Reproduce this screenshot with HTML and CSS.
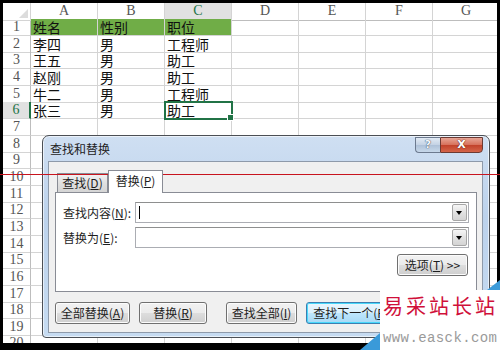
FILE: index.html
```html
<!DOCTYPE html>
<html lang="zh-CN">
<head>
    <meta charset="UTF-8">
    <title>查找和替换</title>
    <link rel="stylesheet" href="styles.css">
</head>
<body>
<div class="screen">

    <!-- Feuille de calcul -->
    <div class="sheet">
        <div class="row head">
            <div class="corner"></div>
            <div class="col">A</div><div class="col">B</div><div class="col active">C</div><div class="col">D</div><div class="col">E</div><div class="col">F</div><div class="col">G</div>
        </div>
        <div class="row">
            <div class="num">1</div>
            <div class="cell fill">姓名</div><div class="cell fill">性别</div><div class="cell fill">职位</div><div class="cell"></div><div class="cell"></div><div class="cell"></div><div class="cell"></div>
        </div>
        <div class="row">
            <div class="num">2</div>
            <div class="cell">李四</div><div class="cell">男</div><div class="cell">工程师</div><div class="cell"></div><div class="cell"></div><div class="cell"></div><div class="cell"></div>
        </div>
        <div class="row">
            <div class="num">3</div>
            <div class="cell">王五</div><div class="cell">男</div><div class="cell">助工</div><div class="cell"></div><div class="cell"></div><div class="cell"></div><div class="cell"></div>
        </div>
        <div class="row">
            <div class="num">4</div>
            <div class="cell">赵刚</div><div class="cell">男</div><div class="cell">助工</div><div class="cell"></div><div class="cell"></div><div class="cell"></div><div class="cell"></div>
        </div>
        <div class="row">
            <div class="num">5</div>
            <div class="cell">牛二</div><div class="cell">男</div><div class="cell">工程师</div><div class="cell"></div><div class="cell"></div><div class="cell"></div><div class="cell"></div>
        </div>
        <div class="row">
            <div class="num active">6</div>
            <div class="cell">张三</div><div class="cell">男</div><div class="cell selected">助工</div><div class="cell"></div><div class="cell"></div><div class="cell"></div><div class="cell"></div>
        </div>
        <div class="row"><div class="num">7</div><div class="cell"></div><div class="cell"></div><div class="cell"></div><div class="cell"></div><div class="cell"></div><div class="cell"></div><div class="cell"></div></div>
        <div class="row"><div class="num">8</div><div class="cell"></div><div class="cell"></div><div class="cell"></div><div class="cell"></div><div class="cell"></div><div class="cell"></div><div class="cell"></div></div>
        <div class="row"><div class="num">9</div><div class="cell"></div><div class="cell"></div><div class="cell"></div><div class="cell"></div><div class="cell"></div><div class="cell"></div><div class="cell"></div></div>
        <div class="row"><div class="num">10</div><div class="cell"></div><div class="cell"></div><div class="cell"></div><div class="cell"></div><div class="cell"></div><div class="cell"></div><div class="cell"></div></div>
        <div class="row"><div class="num">11</div><div class="cell"></div><div class="cell"></div><div class="cell"></div><div class="cell"></div><div class="cell"></div><div class="cell"></div><div class="cell"></div></div>
        <div class="row"><div class="num">12</div><div class="cell"></div><div class="cell"></div><div class="cell"></div><div class="cell"></div><div class="cell"></div><div class="cell"></div><div class="cell"></div></div>
        <div class="row"><div class="num">13</div><div class="cell"></div><div class="cell"></div><div class="cell"></div><div class="cell"></div><div class="cell"></div><div class="cell"></div><div class="cell"></div></div>
        <div class="row"><div class="num">14</div><div class="cell"></div><div class="cell"></div><div class="cell"></div><div class="cell"></div><div class="cell"></div><div class="cell"></div><div class="cell"></div></div>
        <div class="row"><div class="num">15</div><div class="cell"></div><div class="cell"></div><div class="cell"></div><div class="cell"></div><div class="cell"></div><div class="cell"></div><div class="cell"></div></div>
        <div class="row"><div class="num">16</div><div class="cell"></div><div class="cell"></div><div class="cell"></div><div class="cell"></div><div class="cell"></div><div class="cell"></div><div class="cell"></div></div>
        <div class="row"><div class="num">17</div><div class="cell"></div><div class="cell"></div><div class="cell"></div><div class="cell"></div><div class="cell"></div><div class="cell"></div><div class="cell"></div></div>
        <div class="row"><div class="num">18</div><div class="cell"></div><div class="cell"></div><div class="cell"></div><div class="cell"></div><div class="cell"></div><div class="cell"></div><div class="cell"></div></div>
        <div class="row"><div class="num">19</div><div class="cell"></div><div class="cell"></div><div class="cell"></div><div class="cell"></div><div class="cell"></div><div class="cell"></div><div class="cell"></div></div>
        <div class="row"><div class="num">20</div><div class="cell"></div><div class="cell"></div><div class="cell"></div><div class="cell"></div><div class="cell"></div><div class="cell"></div><div class="cell"></div></div>
    </div>

    <!-- Boîte de dialogue -->
    <div class="dialog">
        <div class="titlebar">
            <span class="title">查找和替换</span>
            <div class="caption">
                <span class="help">?</span>
                <span class="close">X</span>
            </div>
        </div>
        <div class="client">
            <div class="tabs">
                <span class="tab">查找(<u>D</u>)</span>
                <span class="tab current">替换(<u>P</u>)</span>
            </div>
            <div class="panel">
                <div class="field">
                    <label>查找内容(<u>N</u>):</label>
                    <div class="combo"><span class="caret"></span><span class="drop"></span></div>
                </div>
                <div class="field">
                    <label>替换为(<u>E</u>):</label>
                    <div class="combo"><span class="drop"></span></div>
                </div>
                <div class="options">
                    <button class="btn opt">选项(<u>T</u>) &gt;&gt;</button>
                </div>
            </div>
            <div class="actions">
                <button class="btn w75">全部替换(<u>A</u>)</button>
                <button class="btn w68">替换(<u>R</u>)</button>
                <button class="btn w71 group">查找全部(<u>I</u>)</button>
                <button class="btn w89 default">查找下一个(<u>F</u>)</button>
            </div>
        </div>
    </div>

    <div class="redline"></div>

    <!-- Filigrane -->
    <div class="watermark">
        <svg class="wm-shape" width="140" height="72" viewBox="0 0 140 72">
            <polygon points="127,12 140,2 140,12" fill="#3a9ad9"/>
            <rect x="20" y="12" width="120" height="60" fill="#ffffff"/>
            <polygon points="0,72 20,55 20,72" fill="#3a9ad9"/>
        </svg>
        <div class="wm-title">易采站长站</div>
        <div class="wm-url">www.easck.com</div>
    </div>
</div>
</body>
</html>
```

FILE: styles.css
```css
body {
    margin: 0;
    padding: 0;
    background: #000;
}
.screen {
    position: relative;
    width: 500px;
    height: 350px;
    overflow: hidden;
    background: #000;
}

/* feuille */
.sheet {
    position: absolute;
    left: 3px;
    top: 3px;
    width: 494px;
    height: 340px;
    overflow: hidden;
    background: #fff;
}
.row {
    display: grid;
    grid-template-columns: 28px repeat(7, 67px);
    height: 16.67px;
}
.row.head {
    height: 16px;
}
.row > div {
    box-sizing: border-box;
    border-right: 1px solid #d4d4d4;
    border-bottom: 1px solid #d4d4d4;
    white-space: nowrap;
}
.corner {
    position: relative;
}
.corner::after {
    content: "";
    position: absolute;
    right: 2px;
    bottom: 2px;
    border-left: 9px solid transparent;
    border-bottom: 9px solid #dcdcdc;
}
.col, .num {
    font-family: "Liberation Serif", serif;
    font-size: 14px;
    line-height: 16px;
    color: #555;
    text-align: center;
}
.row > .col {
    border-bottom-color: #bdbdbd;
}
.row > .num {
    border-right-color: #bdbdbd;
}
.row > .col.active {
    background: #e1e1e1;
    color: #217346;
    border-bottom: 2px solid #217346;
}
.row > .num.active {
    background: #e1e1e1;
    color: #217346;
    border-right: 2px solid #217346;
}
.cell {
    font-family: "Noto Sans CJK SC", sans-serif;
    font-size: 14px;
    line-height: 16px;
    color: #111;
    padding-left: 2px;
}
.cell.fill {
    background: #70ad47;
}
.row > .cell.selected {
    position: relative;
    outline: 2px solid #217346;
    outline-offset: -1px;
}
.cell.selected::after {
    content: "";
    position: absolute;
    right: -3px;
    bottom: -3px;
    width: 5px;
    height: 5px;
    background: #217346;
    border: 1px solid #fff;
}

/* dialogue */
.dialog {
    position: absolute;
    left: 42px;
    top: 135px;
    width: 448px;
    height: 203px;
    box-sizing: border-box;
    padding: 0 6px 4px 5px;
    border: 1px solid #4b4f55;
    border-radius: 7px 7px 4px 4px;
    background: linear-gradient(to bottom, #cfdff2 0%, #bcd2ec 40%, #c6dbf1 100%);
    box-shadow: inset 0 0 0 1px rgba(255, 255, 255, 0.6);
    font-family: "Noto Sans CJK SC", sans-serif;
    font-size: 12px;
    color: #1e1e1e;
}
.titlebar {
    display: flex;
    justify-content: space-between;
    align-items: flex-start;
    height: 25px;
}
.title {
    padding: 6px 0 0 2px;
    line-height: 14px;
    color: #222;
}
.caption {
    display: flex;
    margin-top: 1px;
}
.help, .close {
    box-sizing: border-box;
    height: 16px;
    line-height: 14px;
    text-align: center;
    font-family: "DejaVu Sans", sans-serif;
    font-weight: bold;
}
.help {
    width: 25px;
    border: 1px solid #6c7a8f;
    border-right: none;
    border-radius: 0 0 0 4px;
    background: linear-gradient(to bottom, #e2eaf4, #c3d2e4 50%, #aec1d8 51%, #c7d8ea);
    color: #f4f7fb;
    font-size: 11px;
    text-shadow: 0 0 1px #3d4f66, 0 0 1px #3d4f66;
}
.close {
    width: 43px;
    border: 1px solid #6c3a33;
    border-radius: 0 0 4px 0;
    background: linear-gradient(to bottom, #e8a596, #d6705a 50%, #c1412a 51%, #d4654a);
    color: #fff;
    font-size: 11px;
    text-shadow: 0 0 1px #5b1d14, 0 0 1px #5b1d14;
}
.client {
    box-sizing: border-box;
    width: 435px;
    height: 172px;
    background: #f0f0f0;
    border: 1px solid #8e9aaa;
    padding: 8px 5px 0 6px;
    overflow: hidden;
}
.tabs {
    display: flex;
    align-items: flex-end;
    padding-left: 2px;
    height: 22px;
}
.tab {
    box-sizing: border-box;
    height: 19px;
    width: 51px;
    line-height: 17px;
    text-align: center;
    border: 1px solid #898c95;
    border-bottom: none;
    background: linear-gradient(to bottom, #f2f2f2, #e0e0e0 50%, #d5d5d5);
}
.tab.current {
    position: relative;
    z-index: 1;
    width: 55px;
    height: 23px;
    margin-bottom: -1px;
    line-height: 19px;
    background: #fff;
}
.panel {
    box-sizing: border-box;
    height: 100px;
    border: 1px solid #898c95;
    background: #fff;
    padding: 9px 7px 0 7px;
}
.field {
    display: flex;
    align-items: center;
    height: 21px;
    margin-bottom: 4px;
}
.field label {
    width: 72px;
    line-height: 14px;
}
.combo {
    position: relative;
    box-sizing: border-box;
    width: 335px;
    height: 21px;
    border: 1px solid #abadb3;
    border-top-color: #8e8f8f;
    background: #fff;
}
.caret {
    position: absolute;
    left: 3px;
    top: 3px;
    width: 1px;
    height: 13px;
    background: #000;
}
.drop {
    position: absolute;
    right: 1px;
    top: 1px;
    box-sizing: border-box;
    width: 15px;
    height: 17px;
    border: 1px solid #a7a7a7;
    border-radius: 2px;
    background: linear-gradient(to bottom, #f6f6f6, #e2e2e2 50%, #d4d4d4);
}
.drop::after {
    content: "";
    position: absolute;
    left: 3px;
    top: 6px;
    border-left: 3.5px solid transparent;
    border-right: 3.5px solid transparent;
    border-top: 4px solid #000;
}
.options {
    display: flex;
    justify-content: flex-end;
    margin-top: 6px;
    padding-right: 1px;
}
.btn {
    box-sizing: border-box;
    flex-shrink: 0;
    height: 22px;
    padding: 0;
    border: 1px solid #707070;
    border-radius: 3px;
    background: linear-gradient(to bottom, #f2f2f2, #ebebeb 50%, #dddddd 51%, #cfcfcf);
    box-shadow: inset 0 0 0 1px #fcfcfc;
    font-family: "Noto Sans CJK SC", sans-serif;
    font-size: 12px;
    line-height: 18px;
    color: #1e1e1e;
    white-space: nowrap;
}
.btn.opt {
    width: 71px;
}
.actions {
    display: flex;
    gap: 9px;
    margin-top: 10px;
}
.w75 { width: 75px; }
.w68 { width: 68px; }
.w71 { width: 71px; }
.w89 { width: 89px; }
.group {
    margin-left: 10px;
}
.btn.default {
    border-color: #3c7fb1;
    box-shadow: inset 0 0 0 1px #48d8fb;
    background: linear-gradient(to bottom, #eaf6fd, #d9f0fc 50%, #bee6fd 51%, #a7d9f5);
}

/* trait rouge */
.redline {
    position: absolute;
    left: 0;
    top: 174px;
    width: 500px;
    height: 1px;
    background: #c8141e;
}

/* filigrane */
.watermark {
    position: absolute;
    left: 360px;
    top: 278px;
    width: 140px;
    height: 72px;
}
.wm-shape {
    position: absolute;
    left: 0;
    top: 0;
}
.wm-title {
    position: absolute;
    left: 23px;
    top: 15px;
    font-family: "Noto Sans CJK SC", sans-serif;
    font-size: 20px;
    line-height: 26px;
    letter-spacing: 3px;
    color: #d0103a;
}
.wm-url {
    position: absolute;
    left: 23px;
    top: 52px;
    font-family: "Liberation Mono", monospace;
    font-size: 14px;
    line-height: 16px;
    letter-spacing: 0.4px;
    color: #9a9a9a;
}
```
